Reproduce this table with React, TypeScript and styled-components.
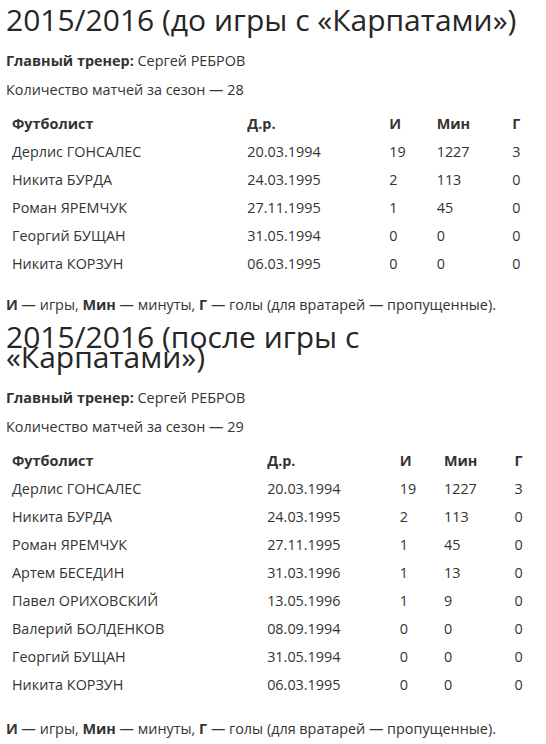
import { FC } from 'react'
import styled, { createGlobalStyle } from 'styled-components'

const GlobalStyle = createGlobalStyle`
  html, body {
    margin: 0;
    padding: 0;
    background: #ffffff;
  }
  body {
    font-family: 'Open Sans', 'Liberation Sans', sans-serif;
    color: #333333;
    font-size: 14.4px;
  }
`

const Page = styled.div`
  width: 546px;
  padding: 10px 6px 0;
  box-sizing: border-box;
`

const Section = styled.section`
  & + & {
    margin-top: 12px;
  }
`

const Title = styled.h2`
  margin: 0 0 21px;
  font-size: 30px;
  font-weight: 400;
  line-height: 20px;
  color: #262626;
`

const Para = styled.p`
  margin: 0 0 9px;
  line-height: 20px;
`

const Table = styled.table<{ gapBelow: number }>`
  width: 100%;
  border-collapse: collapse;
  margin-bottom: ${(p) => p.gapBelow}px;

  th,
  td {
    padding: 0 6px;
    height: 28px;
    text-align: left;
    vertical-align: middle;
    white-space: nowrap;
  }

  th {
    font-weight: 700;
  }
`

const Note = styled.p`
  margin: 0;
  line-height: 20px;
`

interface IPlayer {
  name: string
  born: string
  games: number
  mins: number
  goals: number
}

interface ISeason {
  title: string
  matches: number
  gapBelow: number
  players: IPlayer[]
}

const seasons: ISeason[] = [
  {
    title: '2015/2016 (до игры с «Карпатами»)',
    matches: 28,
    gapBelow: 18,
    players: [
      { name: 'Дерлис ГОНСАЛЕС', born: '20.03.1994', games: 19, mins: 1227, goals: 3 },
      { name: 'Никита БУРДА', born: '24.03.1995', games: 2, mins: 113, goals: 0 },
      { name: 'Роман ЯРЕМЧУК', born: '27.11.1995', games: 1, mins: 45, goals: 0 },
      { name: 'Георгий БУЩАН', born: '31.05.1994', games: 0, mins: 0, goals: 0 },
      { name: 'Никита КОРЗУН', born: '06.03.1995', games: 0, mins: 0, goals: 0 },
    ],
  },
  {
    title: '2015/2016 (после игры с «Карпатами»)',
    matches: 29,
    gapBelow: 21,
    players: [
      { name: 'Дерлис ГОНСАЛЕС', born: '20.03.1994', games: 19, mins: 1227, goals: 3 },
      { name: 'Никита БУРДА', born: '24.03.1995', games: 2, mins: 113, goals: 0 },
      { name: 'Роман ЯРЕМЧУК', born: '27.11.1995', games: 1, mins: 45, goals: 0 },
      { name: 'Артем БЕСЕДИН', born: '31.03.1996', games: 1, mins: 13, goals: 0 },
      { name: 'Павел ОРИХОВСКИЙ', born: '13.05.1996', games: 1, mins: 9, goals: 0 },
      { name: 'Валерий БОЛДЕНКОВ', born: '08.09.1994', games: 0, mins: 0, goals: 0 },
      { name: 'Георгий БУЩАН', born: '31.05.1994', games: 0, mins: 0, goals: 0 },
      { name: 'Никита КОРЗУН', born: '06.03.1995', games: 0, mins: 0, goals: 0 },
    ],
  },
]

const SeasonBlock: FC<{ season: ISeason }> = ({ season }) => (
  <Section>
    <Title>{season.title}</Title>
    <Para>
      <b>Главный тренер:</b> Сергей РЕБРОВ
    </Para>
    <Para>Количество матчей за сезон — {season.matches}</Para>
    <Table gapBelow={season.gapBelow}>
      <thead>
        <tr>
          <th>Футболист</th>
          <th>Д.р.</th>
          <th>И</th>
          <th>Мин</th>
          <th>Г</th>
        </tr>
      </thead>
      <tbody>
        {season.players.map((p) => (
          <tr key={p.name}>
            <td>{p.name}</td>
            <td>{p.born}</td>
            <td>{p.games}</td>
            <td>{p.mins}</td>
            <td>{p.goals}</td>
          </tr>
        ))}
      </tbody>
    </Table>
    <Note>
      <b>И</b> — игры, <b>Мин</b> — минуты, <b>Г</b> — голы (для вратарей — пропущенные).
    </Note>
  </Section>
)

const App: FC = () => (
  <>
    <GlobalStyle />
    <Page>
      {seasons.map((s) => (
        <SeasonBlock key={s.matches} season={s} />
      ))}
    </Page>
  </>
)

export default App
